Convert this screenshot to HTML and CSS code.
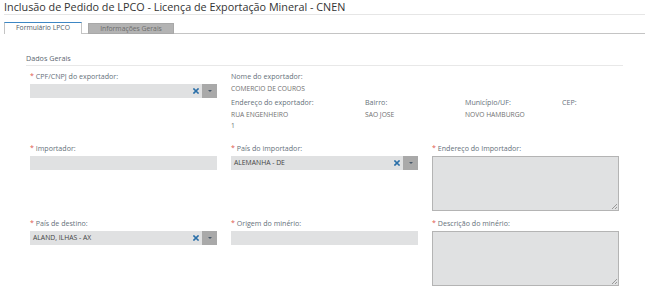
FILE: index.html
```html
<!DOCTYPE html>
<html lang="pt">
<head>
<meta charset="utf-8">
<title>Inclusão de Pedido de LPCO</title>
<link rel="stylesheet" href="styles.css">
</head>
<body>
<div class="page">
  <h1 class="title">Inclusão de Pedido de LPCO - Licença de Exportação Mineral - CNEN</h1>
  <div class="tabs">
    <div class="tab tab-active">Formulário LPCO</div>
    <div class="tab tab-inactive">Informações Gerais</div>
  </div>
  <div class="content">
    <div class="section-title">Dados Gerais</div>

    <div class="row row-1">
      <div class="field">
        <label class="label"><span class="req">*</span> CPF/CNPJ do exportador:</label>
        <div class="select">
          <span class="select-value"></span>
          <span class="clear">
            <svg width="6" height="6" viewBox="0 0 6 6"><path d="M1 1 L5 5 M5 1 L1 5" stroke="#2a6fa8" stroke-width="1.6" stroke-linecap="square"/></svg>
          </span>
          <span class="arrow"><svg width="6" height="4" viewBox="0 0 6 4"><path d="M1 1 L5 1 L3 3 Z" fill="#4a5a6a"/></svg></span>
        </div>
      </div>
      <div class="exporter">
        <div class="info-label">Nome do exportador:</div>
        <div class="info-value">COMERCIO DE COUROS</div>
        <div class="addr">
          <div class="addr-col">
            <div class="info-label">Endereço do exportador:</div>
            <div class="info-value">RUA ENGENHEIRO<br>1</div>
          </div>
          <div class="addr-col">
            <div class="info-label">Bairro:</div>
            <div class="info-value">SAO JOSE</div>
          </div>
          <div class="addr-col">
            <div class="info-label">Município/UF:</div>
            <div class="info-value">NOVO HAMBURGO</div>
          </div>
          <div class="addr-col">
            <div class="info-label">CEP:</div>
            <div class="info-value"></div>
          </div>
        </div>
      </div>
    </div>

    <div class="row row-2">
      <div class="field">
        <label class="label"><span class="req">*</span> Importador:</label>
        <div class="input"></div>
      </div>
      <div class="field">
        <label class="label"><span class="req">*</span> País do importador:</label>
        <div class="select">
          <span class="select-value">ALEMANHA - DE</span>
          <span class="clear">
            <svg width="6" height="6" viewBox="0 0 6 6"><path d="M1 1 L5 5 M5 1 L1 5" stroke="#2a6fa8" stroke-width="1.6" stroke-linecap="square"/></svg>
          </span>
          <span class="arrow"><svg width="6" height="4" viewBox="0 0 6 4"><path d="M1 1 L5 1 L3 3 Z" fill="#4a5a6a"/></svg></span>
        </div>
      </div>
      <div class="field">
        <label class="label"><span class="req">*</span> Endereço do Importador:</label>
        <div class="textarea"><span class="grip"></span></div>
      </div>
    </div>

    <div class="row row-3">
      <div class="field">
        <label class="label"><span class="req">*</span> País de destino:</label>
        <div class="select">
          <span class="select-value">ALAND, ILHAS - AX</span>
          <span class="clear">
            <svg width="6" height="6" viewBox="0 0 6 6"><path d="M1 1 L5 5 M5 1 L1 5" stroke="#2a6fa8" stroke-width="1.6" stroke-linecap="square"/></svg>
          </span>
          <span class="arrow"><svg width="6" height="4" viewBox="0 0 6 4"><path d="M1 1 L5 1 L3 3 Z" fill="#4a5a6a"/></svg></span>
        </div>
      </div>
      <div class="field">
        <label class="label"><span class="req">*</span> Origem do minério:</label>
        <div class="input"></div>
      </div>
      <div class="field">
        <label class="label"><span class="req">*</span> Descrição do minério:</label>
        <div class="textarea"><span class="grip"></span></div>
      </div>
    </div>
  </div>
</div>
</body>
</html>
```

FILE: styles.css
```css
* { box-sizing: border-box; }
html, body { margin: 0; padding: 0; background: #fff; }
body { font-family: "Open Sans", "DejaVu Sans", sans-serif; color: #555; }

.page { padding: 0 5px 0 4px; }

.title {
  margin: 0;
  font-weight: 400;
  font-size: 10.8px;
  line-height: 15px;
  color: #333;
  border-bottom: 1px solid #e6e6e6;
  padding-bottom: 0;
  margin-top: -1px;
}

.tabs {
  display: flex;
  margin-top: 7px;
  border-bottom: 1px solid #c4c4c4;
  height: 12px;
}
.tab {
  font-size: 6.8px;
  line-height: 10px;
  height: 11px;
  text-align: center;
}
.tab-active {
  width: 78px;
  background: #fff;
  border: 1px solid #c4c4c4;
  border-top: 1px solid #3d87c4;
  border-bottom: none;
  height: 12px;
  color: #4f5b66;
}
.tab-inactive {
  margin-left: 6px;
  margin-top: 1px;
  width: 86px;
  background: #b3b3b3;
  border: 1px solid #a8a8a8;
  color: #6d6d6d;
}

.content { padding: 0 22px 0 22px; }

.section-title {
  margin-top: 19px;
  font-size: 7.2px;
  line-height: 11px;
  color: #5c6670;
  border-bottom: 1px solid #e8e8e8;
  padding-bottom: 1px;
}

.row {
  display: grid;
  grid-template-columns: 187px 187px 187px;
  column-gap: 14px;
  padding-left: 4px;
}
.row-1 { margin-top: 4px; }
.row-2 { margin-top: 9px; }
.row-3 { margin-top: 6px; }

.label {
  display: block;
  font-size: 7.1px;
  line-height: 12px;
  color: #66717b;
  margin-bottom: 2px;
}
.req { color: #e0564e; }

.select, .input {
  height: 14px;
  background: #e0e1e2;
  display: flex;
  align-items: center;
}
.select-value {
  flex: 1;
  font-size: 6.8px;
  font-weight: 400;
  color: #444;
  padding-left: 3px;
  line-height: 14px;
}
.clear { width: 6px; display: flex; align-items: center; margin-right: 3px; }
.arrow {
  width: 15px;
  height: 14px;
  background: #a9a9a9;
  display: flex;
  align-items: center;
  justify-content: center;
}

.textarea {
  position: relative;
  height: 55px;
  background: #e0e1e2;
  border: 1px solid #b4b4b4;
}
.grip {
  position: absolute;
  right: 1px;
  bottom: 1px;
  width: 5px;
  height: 5px;
  background: linear-gradient(135deg, transparent 45%, #999 45%, #999 55%, transparent 55%, transparent 75%, #999 75%, #999 85%, transparent 85%);
}

.exporter { grid-column: 2 / span 2; margin-top: -0.5px; }
.info-label {
  font-size: 7.1px;
  line-height: 13px;
  color: #66717b;
}
.info-value {
  font-size: 6.7px;
  line-height: 11px;
  color: #707070;
  margin-bottom: 2px;
}
.addr {
  display: grid;
  grid-template-columns: 134px 100px 97px 1fr;
}
```
